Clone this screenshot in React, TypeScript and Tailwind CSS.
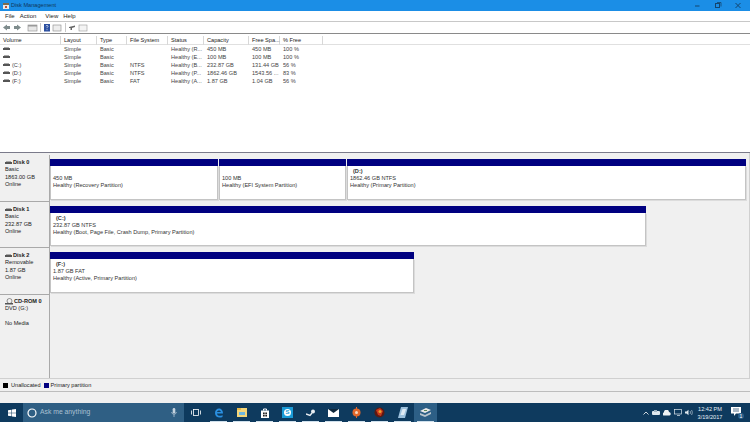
import React from "react";

const columns = ["Volume", "Layout", "Type", "File System", "Status", "Capacity", "Free Spa...", "% Free"];
const tableGrid = "grid grid-cols-[61px_36px_30px_41px_36px_45px_31px_43px]";

const volumes = [
  ["", "Simple", "Basic", "", "Healthy (R...", "450 MB", "450 MB", "100 %"],
  ["", "Simple", "Basic", "", "Healthy (E...", "100 MB", "100 MB", "100 %"],
  ["(C:)", "Simple", "Basic", "NTFS", "Healthy (B...", "232.87 GB", "131.44 GB", "56 %"],
  ["(D:)", "Simple", "Basic", "NTFS", "Healthy (P...", "1862.46 GB", "1543.56 ...", "83 %"],
  ["(F:)", "Simple", "Basic", "FAT", "Healthy (A...", "1.87 GB", "1.04 GB", "56 %"],
];

const DiskGlyph = () => (
  <svg width="7" height="4" viewBox="0 0 7 4" className="shrink-0">
    <rect x="0" y="1" width="7" height="2" fill="#555" />
    <rect x="1" y="0" width="5" height="1" fill="#aaa" />
  </svg>
);

const Partition = ({ width, title, lines }: { width: string; title?: string; lines: string[] }) => (
  <div className={`${width} flex flex-col h-full`}>
    <div className="h-[7px] bg-[#000080] shrink-0" />
    <div className="flex-1 bg-white border border-[#c4c4c4] border-t-0 pl-[2px] pt-[2px] leading-[7px] text-[#333] shadow-[1px_1px_0_#dcdcdc]">
      {title ? <div className="pl-[3px] font-bold">{title}</div> : <div className="h-[7px]" />}
      {lines.map((line) => (
        <div key={line} className="whitespace-nowrap">{line}</div>
      ))}
    </div>
  </div>
);

const DiskRow = ({ name, lines, height, children }: { name: string; lines: string[]; height: string; children?: React.ReactNode }) => (
  <div className={`flex ${height} shrink-0`}>
    <div className="w-[50px] shrink-0 bg-[#f0f0f0] border-r border-b border-[#a9a9a9] pl-[5px] pt-[4px] leading-[7.3px]">
      <div className="flex items-center gap-[1px] font-bold h-[7.3px]">
        <DiskGlyph />
        {name}
      </div>
      {lines.map((line, i) => (
        <div key={i} className="h-[7.3px] whitespace-nowrap">{line}</div>
      ))}
    </div>
    <div className="flex-1 flex bg-[#f0f0f0] gap-[1px] pt-[4px] pb-[2px]">{children}</div>
  </div>
);

const TaskCell = ({ active, children }: { active?: boolean; children: React.ReactNode }) => (
  <div className={`relative w-[23px] h-full flex items-center justify-center shrink-0 ${active ? "bg-[#2d5f86]" : ""}`}>
    {children}
    <div className="absolute bottom-0 left-[3px] right-[3px] h-[1px] bg-[#cfe0ec]" />
  </div>
);

export default function App() {
  return (
    <div className="w-[750px] h-[422px] overflow-hidden flex flex-col bg-[#f0f0f0] text-[5.6px] text-[#222] font-['Liberation_Sans',sans-serif]">
      {/* Title bar */}
      <div className="h-[11px] shrink-0 bg-[#1b8ee6] flex items-center pl-[3px] text-[#10375a]">
        <svg width="6" height="6" viewBox="0 0 6 6" className="mr-[2px]">
          <rect width="6" height="6" fill="#e8e8e8" />
          <rect y="0" width="6" height="2" fill="#7a6a50" />
          <rect x="2" y="3" width="2" height="2" fill="#c05030" />
        </svg>
        <span className="flex-1">Disk Management</span>
        <svg width="55" height="8" viewBox="0 0 55 8">
          <path d="M0 4h4.500" stroke="#14466f" strokeWidth="1" />
          <rect x="20.500" y="1.500" width="4" height="4" fill="none" stroke="#14466f" />
          <path d="M22 0.500h4v4" fill="none" stroke="#14466f" strokeWidth="0.8" />
          <path d="M40.500 1l5 5M45.500 1l-5 5" stroke="#14466f" strokeWidth="1" />
        </svg>
      </div>
      {/* Menu */}
      <div className="h-[11px] shrink-0 bg-white flex items-center pl-[5px] text-[6px] border-b border-[#c8c8c8]">
        <span>File</span>
        <span className="ml-[5px]">Action</span>
        <span className="ml-[9px]">View</span>
        <span className="ml-[5px]">Help</span>
      </div>
      {/* Toolbar */}
      <div className="h-[11px] shrink-0 bg-white flex items-center pl-[2px]">
        <svg width="86" height="9" viewBox="0 0 86 9">
          <path d="M1 4.500L5 1.500v1.500h3v3H5v1.500z" fill="#7f8c8d" />
          <path d="M19 4.500L15 1.500v1.500h-3v3h3v1.500z" fill="#7f8c8d" />
          <rect x="26" y="2" width="9" height="6" fill="#e8e8e8" stroke="#8a8a8a" strokeWidth="0.6" />
          <rect x="26" y="2" width="9" height="1.500" fill="#9a9a9a" />
          <rect x="38" y="0" width="0.8" height="9" fill="#bbb" />
          <rect x="42" y="1" width="6" height="7.500" fill="#2b4fa0" />
          <path d="M44 3.200c0-1 2-1 2 0s-1 .8-1 2M45 6.200v1" stroke="#fff" strokeWidth="0.7" fill="none" />
          <rect x="51" y="2" width="8" height="6" fill="#eee" stroke="#888" strokeWidth="0.6" />
          <rect x="63" y="0" width="0.8" height="9" fill="#bbb" />
          <path d="M67 4l6-1.500v1.500l-3 1v2h-1.500v-2h-1.500z" fill="#666" />
          <rect x="77" y="2" width="8" height="6" fill="#f4f4f4" stroke="#999" strokeWidth="0.6" />
        </svg>
      </div>
      {/* Volume list */}
      <div className="h-[120px] shrink-0 bg-white border-t border-[#8a8a8a] border-b border-b-[#7a7a8a] pt-[2px]">
        <div className={`${tableGrid} h-[9px] items-center leading-[9px] border-b border-[#e0e0e0]`}>
          {columns.map((col) => (
            <div key={col} className="pl-[3px] border-r border-[#d8d8d8] h-full whitespace-nowrap">{col}</div>
          ))}
        </div>
        <div>
          {volumes.map((row, r) => (
            <div key={r} className={`${tableGrid} h-[8px] items-center leading-[8px] text-[#444]`}>
              {row.map((cell, c) => (
                <div key={c} className="pl-[3px] whitespace-nowrap overflow-hidden flex items-center gap-[2px]">
                  {c === 0 && <DiskGlyph />}
                  {cell}
                </div>
              ))}
            </div>
          ))}
        </div>
      </div>
      {/* Disk map */}
      <div className="h-[226px] shrink-0 flex flex-col pt-[2px] pr-[3px] border-r border-b border-[#d0d0d0]">
        <DiskRow name="Disk 0" lines={["Basic", "1863.00 GB", "Online"]} height="h-[47px]">
          <Partition width="w-[168px]" lines={["450 MB", "Healthy (Recovery Partition)"]} />
          <Partition width="w-[127px]" lines={["100 MB", "Healthy (EFI System Partition)"]} />
          <Partition width="w-[399px]" title="(D:)" lines={["1862.46 GB NTFS", "Healthy (Primary Partition)"]} />
        </DiskRow>
        <DiskRow name="Disk 1" lines={["Basic", "232.87 GB", "Online"]} height="h-[46px]">
          <Partition width="w-[596px]" title="(C:)" lines={["232.87 GB NTFS", "Healthy (Boot, Page File, Crash Dump, Primary Partition)"]} />
        </DiskRow>
        <DiskRow name="Disk 2" lines={["Removable", "1.87 GB", "Online"]} height="h-[47px]">
          <Partition width="w-[364px]" title="(F:)" lines={["1.87 GB FAT", "Healthy (Active, Primary Partition)"]} />
        </DiskRow>
        <div className="flex flex-1">
          <div className="w-[50px] shrink-0 border-r border-[#a9a9a9] pl-[5px] pt-[3px] leading-[7.3px]">
            <div className="flex items-center gap-[1px] font-bold">
              <svg width="8" height="7" viewBox="0 0 8 7">
                <ellipse cx="4.500" cy="3" rx="2.500" ry="2.500" fill="none" stroke="#666" strokeWidth="0.7" />
                <rect x="0" y="5" width="8" height="1.500" fill="#555" />
              </svg>
              CD-ROM 0
            </div>
            <div>DVD (G:)</div>
            <div className="h-[7.3px]" />
            <div>No Media</div>
          </div>
          <div className="flex-1" />
        </div>
      </div>
      {/* Legend */}
      <div className="h-[13px] shrink-0 bg-[#f0f0f0] flex items-center pl-[3px] pt-[1px] border-b border-[#bdbdbd]">
        <span className="w-[5px] h-[5px] bg-black mr-[3px]" />
        <span className="mr-[3px]">Unallocated</span>
        <span className="w-[5px] h-[5px] bg-[#000080] mr-[2px]" />
        <span>Primary partition</span>
      </div>
      <div className="flex-1 bg-[#f0f0f0]" />
      {/* Taskbar */}
      <div className="h-[19px] shrink-0 bg-[#0e3a5e] flex items-center text-white">
        <div className="w-[23px] h-full flex items-center justify-center shrink-0">
          <svg width="8" height="8" viewBox="0 0 8 8">
            <path d="M0 1.200L3.500.7v3H0zM4 .6L8 0v3.700H4zM0 4.200h3.500v3L0 6.800zM4 4.200h4V8l-4-.6z" fill="#fff" />
          </svg>
        </div>
        <div className="w-[161px] h-full bg-[#2f5f84] flex items-center pl-[4px] shrink-0">
          <svg width="10" height="10" viewBox="0 0 10 10" className="mr-[3px]">
            <circle cx="5" cy="5" r="4" fill="none" stroke="#fff" strokeWidth="1.200" />
          </svg>
          <span className="flex-1 text-[6.800px] text-[#a9c0d2]">Ask me anything</span>
          <svg width="6" height="9" viewBox="0 0 6 9" className="mr-[7px]">
            <rect x="1.700" y="0" width="2.600" height="5.500" rx="1.300" fill="#c5d3de" />
            <path d="M.7 4c0 3 4.600 3 4.600 0M3 6.500V9" stroke="#c5d3de" strokeWidth="0.7" fill="none" />
          </svg>
        </div>
        <div className="w-[23px] h-full flex items-center justify-center shrink-0">
          <svg width="10" height="7" viewBox="0 0 10 7">
            <rect x="2.500" y="0.500" width="5" height="6" fill="none" stroke="#fff" strokeWidth="0.8" />
            <path d="M.5 1.500v4M9.500 1.500v4" stroke="#fff" strokeWidth="0.8" />
          </svg>
        </div>
        <TaskCell>
          <svg width="10" height="10" viewBox="0 0 10 10">
            <path d="M1 5c0-3 2-4.500 4-4.500S9 2 9 5.500H3c0 2.500 3.500 3 5.500 1.500v2C5 10.500 1 9 1 5zM3 4h3.800C6.600 2 3.500 2 3 4z" fill="#2a8fe0" />
          </svg>
        </TaskCell>
        <TaskCell>
          <svg width="10" height="9" viewBox="0 0 10 9">
            <rect y="0" width="10" height="9" fill="#f4d67a" />
            <rect y="0" width="4" height="2" fill="#e4b84a" />
            <rect x="2" y="4" width="6" height="3" fill="#6db7e0" />
          </svg>
        </TaskCell>
        <TaskCell>
          <svg width="8" height="10" viewBox="0 0 8 10">
            <rect y="2.500" width="8" height="7.500" fill="#fff" />
            <path d="M2.500 2.500V1h3v1.500" fill="none" stroke="#fff" />
            <rect x="2" y="4.500" width="1.700" height="1.700" fill="#222" />
            <rect x="4.300" y="4.500" width="1.700" height="1.700" fill="#222" />
            <rect x="2" y="6.800" width="1.700" height="1.700" fill="#222" />
            <rect x="4.300" y="6.800" width="1.700" height="1.700" fill="#222" />
          </svg>
        </TaskCell>
        <TaskCell>
          <div className="w-[11px] h-[11px] bg-[#1a9bd7] flex items-center justify-center">
            <span className="w-[7px] h-[7px] rounded-full bg-white text-[#1a9bd7] text-[6px] leading-[7px] text-center font-bold">S</span>
          </div>
        </TaskCell>
        <TaskCell>
          <svg width="10" height="8" viewBox="0 0 10 8">
            <circle cx="7" cy="2.500" r="2" fill="#e8eef2" />
            <path d="M0 5l4 1.500L6 4" stroke="#e8eef2" strokeWidth="1.400" fill="none" />
          </svg>
        </TaskCell>
        <TaskCell>
          <svg width="11" height="8" viewBox="0 0 11 8">
            <rect width="11" height="8" fill="#fff" />
            <path d="M0 0l5.500 4L11 0z" fill="#10283c" />
          </svg>
        </TaskCell>
        <TaskCell>
          <svg width="9" height="11" viewBox="0 0 9 11">
            <circle cx="4.500" cy="5.500" r="4" fill="#e2672a" />
            <circle cx="4.500" cy="5.500" r="1.500" fill="#f9d9c0" />
            <rect x="4" y="0" width="1" height="2" fill="#e2672a" />
            <rect x="4" y="9" width="1" height="2" fill="#e2672a" />
          </svg>
        </TaskCell>
        <TaskCell>
          <svg width="11" height="11" viewBox="0 0 11 11">
            <circle cx="5.500" cy="5.500" r="5" fill="#5a1a12" />
            <path d="M2 3l4-2 3 3-2 5-3-1z" fill="#c8391c" />
            <circle cx="6" cy="4.500" r="1.500" fill="#e8a530" />
          </svg>
        </TaskCell>
        <TaskCell>
          <svg width="10" height="11" viewBox="0 0 10 11">
            <path d="M3 0h7L7 11H0z" fill="#9cc0dc" />
            <path d="M4.500 2h3.500L6 8H2.500z" fill="#dfeaf3" />
          </svg>
        </TaskCell>
        <TaskCell active>
          <svg width="11" height="9" viewBox="0 0 11 9">
            <path d="M0 3l6-3 5 2-6 3z" fill="#e8e8e8" />
            <path d="M0 5l5 2 6-3v2L5 9 0 7z" fill="#b8c4cc" />
            <rect x="4" y="2" width="3" height="1" fill="#5a8a5a" />
          </svg>
        </TaskCell>
        <div className="flex-1" />
        {/* Tray */}
        <div className="flex items-center gap-[3px] mr-[2px] shrink-0">
          <svg width="6" height="4" viewBox="0 0 6 4">
            <path d="M.5 3.500L3 1l2.500 2.500" stroke="#fff" strokeWidth="0.8" fill="none" />
          </svg>
          <svg width="8" height="6" viewBox="0 0 8 6">
            <rect y="1" width="8" height="4" rx="1" fill="#dfe8ee" />
            <rect x="2" y="0" width="3" height="2" fill="#9fb4c3" />
          </svg>
          <svg width="8" height="6" viewBox="0 0 8 6">
            <path d="M1 5.500a1.500 1.500 0 0 1 0-3A2.500 2.500 0 0 1 6 2a1.800 1.800 0 0 1 .5 3.500z" fill="#eef3f6" />
          </svg>
          <svg width="8" height="7" viewBox="0 0 8 7">
            <rect x="0.500" y="0.500" width="7" height="4.500" fill="none" stroke="#dfe8ee" strokeWidth="0.7" />
            <path d="M3 6.500h3" stroke="#dfe8ee" strokeWidth="0.7" />
          </svg>
          <svg width="8" height="7" viewBox="0 0 8 7">
            <path d="M0 2.500h1.500L3.500.8v5.400L1.500 4.500H0z" fill="#dfe8ee" />
            <path d="M5 2c.6.800.6 2.200 0 3M6.500 1c1 1.500 1 3.500 0 5" stroke="#dfe8ee" strokeWidth="0.6" fill="none" />
          </svg>
        </div>
        <div className="w-[30px] text-center leading-[8px] shrink-0 mr-[6px] text-[#e8f0f6]">
          <div>12:42 PM</div>
          <div>3/19/2017</div>
        </div>
        <div className="relative w-[13px] h-[12px] mr-[6px] shrink-0">
          <svg width="10" height="9" viewBox="0 0 10 9">
            <path d="M0 0h10v6.500H5L3 9V6.500H0z" fill="#fff" />
            <path d="M2 2h6M2 4h6" stroke="#0e3a5e" strokeWidth="0.7" />
          </svg>
          <span className="absolute right-0 bottom-0 w-[6px] h-[6px] rounded-full bg-[#2a5f8a] text-[5px] leading-[6px] text-center">1</span>
        </div>
      </div>
    </div>
  );
}
